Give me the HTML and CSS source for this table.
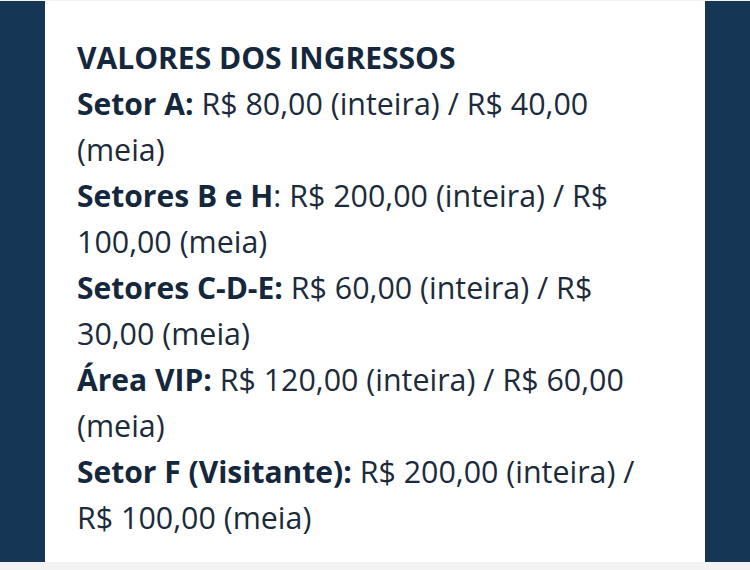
FILE: index.html
```html
<!DOCTYPE html>
<html lang="pt-BR">
<head>
<meta charset="utf-8">
<link rel="stylesheet" href="styles.css">
</head>
<body>
<div class="frame">
  <div class="side"></div>
  <main class="content">
    <h2 class="title">VALORES DOS INGRESSOS</h2>
    <p class="row"><strong>Setor A:</strong> R$ 80,00 (inteira) / R$ 40,00 (meia)</p>
    <p class="row"><strong>Setores B e H</strong>: R$ 200,00 (inteira) / R$ 100,00 (meia)</p>
    <p class="row"><strong>Setores C-D-E:</strong> R$ 60,00 (inteira) / R$ 30,00 (meia)</p>
    <p class="row"><strong>Área VIP:</strong> R$ 120,00 (inteira) / R$ 60,00 (meia)</p>
    <p class="row"><strong>Setor F (Visitante):</strong> R$ 200,00 (inteira) / R$ 100,00 (meia)</p>
  </main>
  <div class="side"></div>
</div>
</body>
</html>
```
FILE: styles.css
```css
html, body {
  margin: 0;
  padding: 0;
}
body {
  background: #f3f3f3;
  width: 750px;
  height: 570px;
  overflow: hidden;
  font-family: "Open Sans", "Noto Sans", sans-serif;
}
.frame {
  margin-top: 1px;
  height: 561px;
  display: grid;
  grid-template-columns: 45px 1fr 45px;
}
.side {
  background: #163656;
}
.content {
  background: #ffffff;
  padding: 34px 45px 0 32px;
  color: #1c2b3b;
  font-size: 30.4px;
  line-height: 46px;
}
.title {
  margin: 0;
  font-size: 30px;
  font-weight: 700;
  line-height: 46px;
  color: #14273d;
}
.row {
  margin: 0;
}
.row strong {
  font-size: 30px;
  font-weight: 700;
  color: #14273d;
}
```
